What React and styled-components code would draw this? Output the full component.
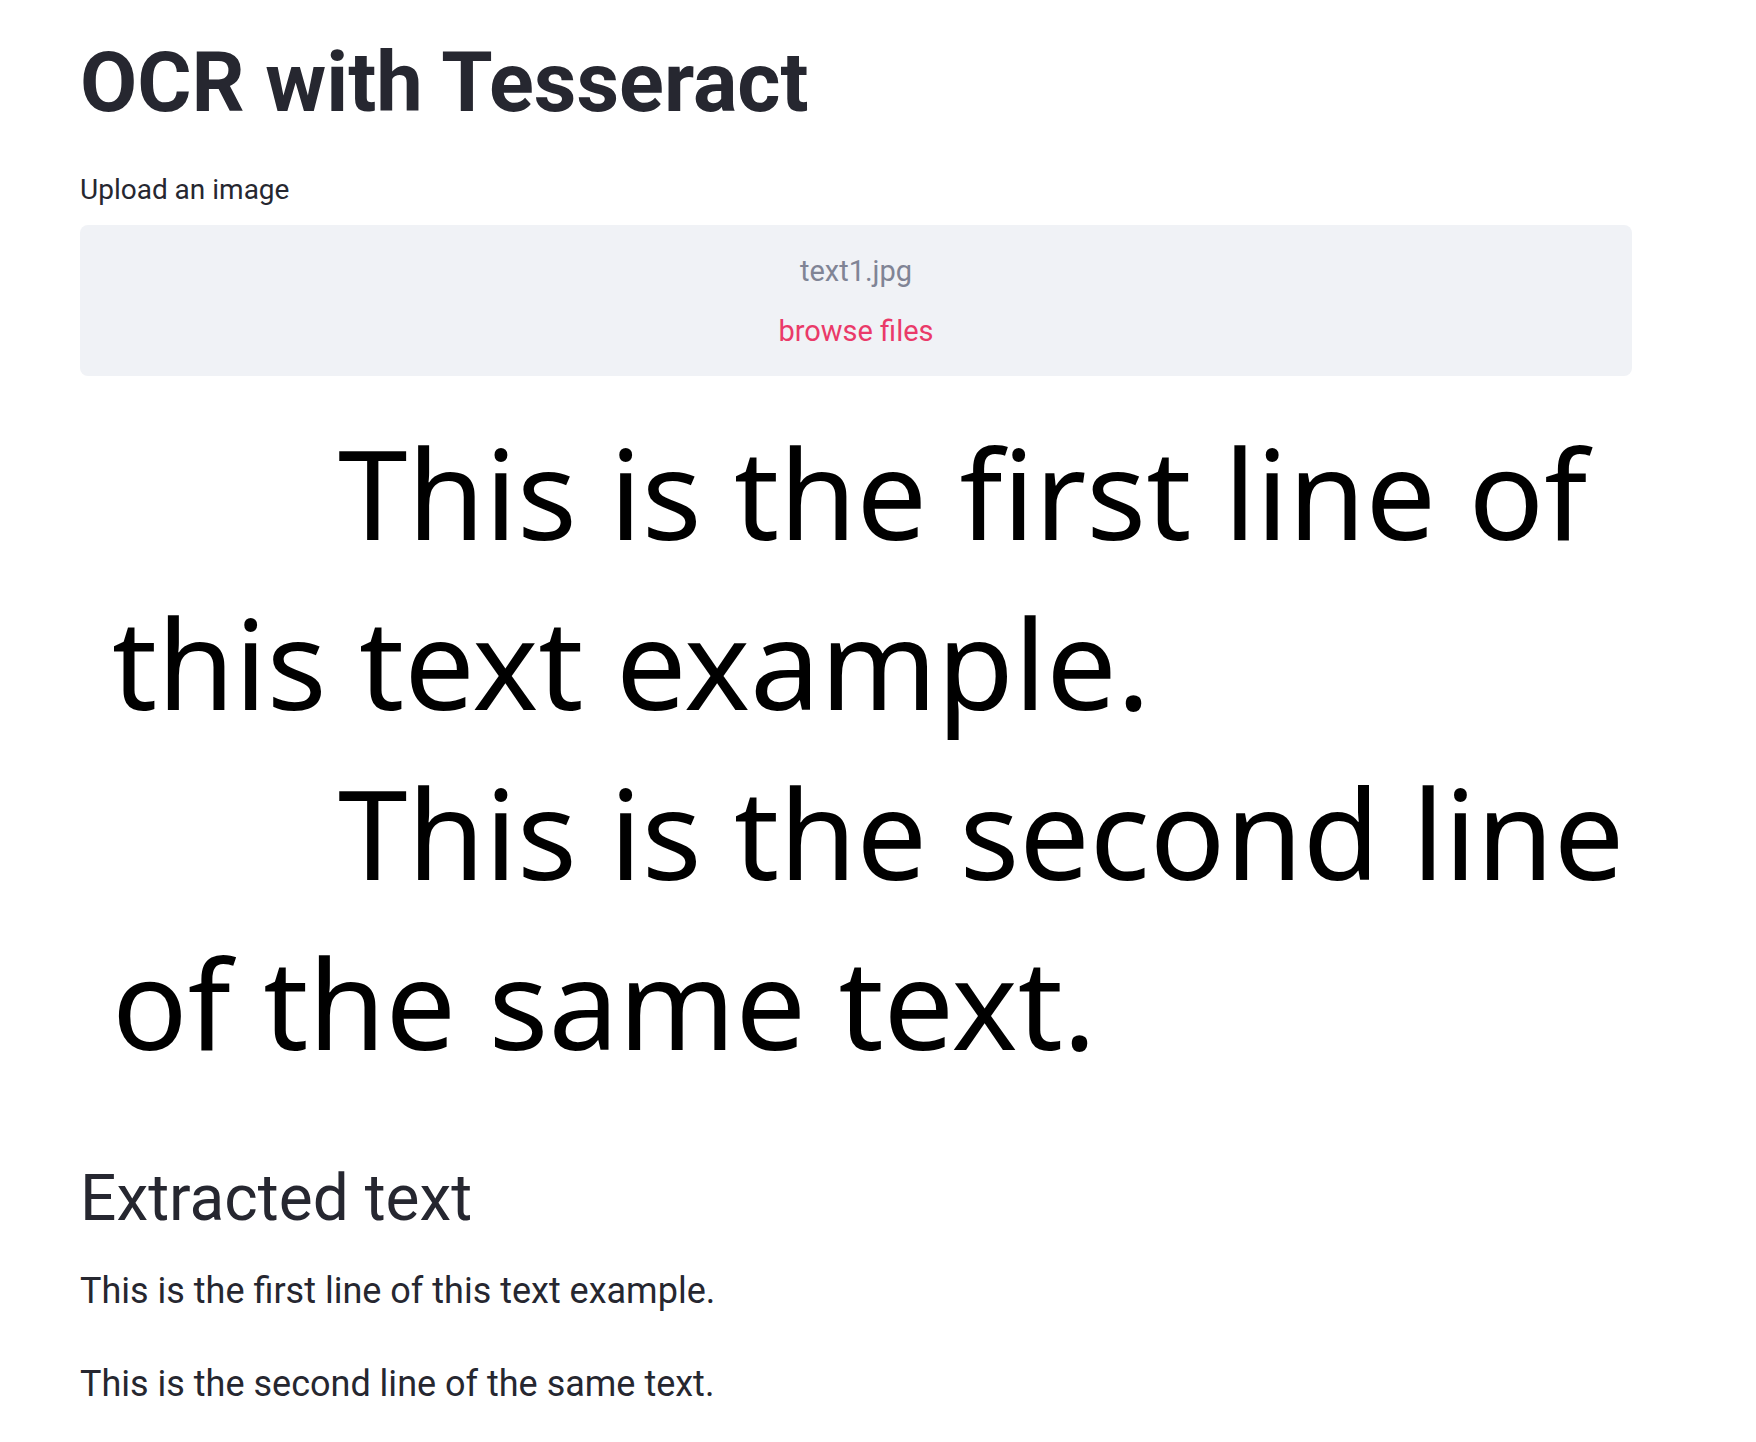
import React from "react";
import styled, { createGlobalStyle } from "styled-components";

const GlobalStyle = createGlobalStyle`
  * { box-sizing: border-box; }
  body { margin: 0; background: #fff; color: #262730; font-family: Roboto, "Noto Sans", sans-serif; }
`;

const Page = styled.main`
  padding: 39px 124px 24px 80px;
`;

const Title = styled.h1`
  margin: 0;
  font-size: 83px;
  line-height: 88px;
  font-weight: 700;
`;

const Label = styled.label`
  display: block;
  margin-top: 45px;
  padding-bottom: 17px;
  font-size: 28px;
  line-height: 36px;
`;

const Dropzone = styled.div`
  display: flex;
  flex-direction: column;
  align-items: center;
  gap: 16px;
  padding: 24px 24px 23px;
  background: #f0f2f6;
  border-radius: 8px;
`;

const FileName = styled.span`
  font-size: 29px;
  line-height: 44px;
  color: #808495;
`;

const BrowseButton = styled.button`
  padding: 0;
  border: 0;
  background: none;
  color: #ea3a69;
  font: inherit;
  font-size: 29px;
  line-height: 44px;
  cursor: pointer;
`;

const Sample = styled.figure`
  margin: 31px 0 0;
  padding-left: 32px;
  color: #000;
  font-family: "Noto Sans", sans-serif;
  font-size: 125px;
  line-height: 170px;
  white-space: nowrap;
`;

const SampleLine = styled.div`
  padding-left: ${(p) => (p.$indent ? "226px" : "0")};
`;

const Heading = styled.h2`
  margin: 72px 0 24px;
  font-size: 64px;
  line-height: 80px;
  font-weight: 400;
`;

const Paragraph = styled.p`
  margin: 0 0 36px;
  font-size: 36px;
  line-height: 57px;

  &:last-child {
    margin-bottom: 0;
  }
`;

const sample = [
  { text: "This is the first line of", indent: true },
  { text: "this text example." },
  { text: "This is the second line", indent: true },
  { text: "of the same text." },
];

export default function App() {
  return (
    <Page>
      <GlobalStyle />
      <Title>OCR with Tesseract</Title>
      <Label htmlFor="browse">Upload an image</Label>
      <Dropzone>
        <FileName>text1.jpg</FileName>
        <BrowseButton id="browse" type="button">browse files</BrowseButton>
      </Dropzone>
      <Sample>
        {sample.map((l) => (
          <SampleLine key={l.text} $indent={l.indent}>{l.text}</SampleLine>
        ))}
      </Sample>
      <Heading>Extracted text</Heading>
      <Paragraph>This is the first line of this text example.</Paragraph>
      <Paragraph>This is the second line of the same text.</Paragraph>
    </Page>
  );
}
